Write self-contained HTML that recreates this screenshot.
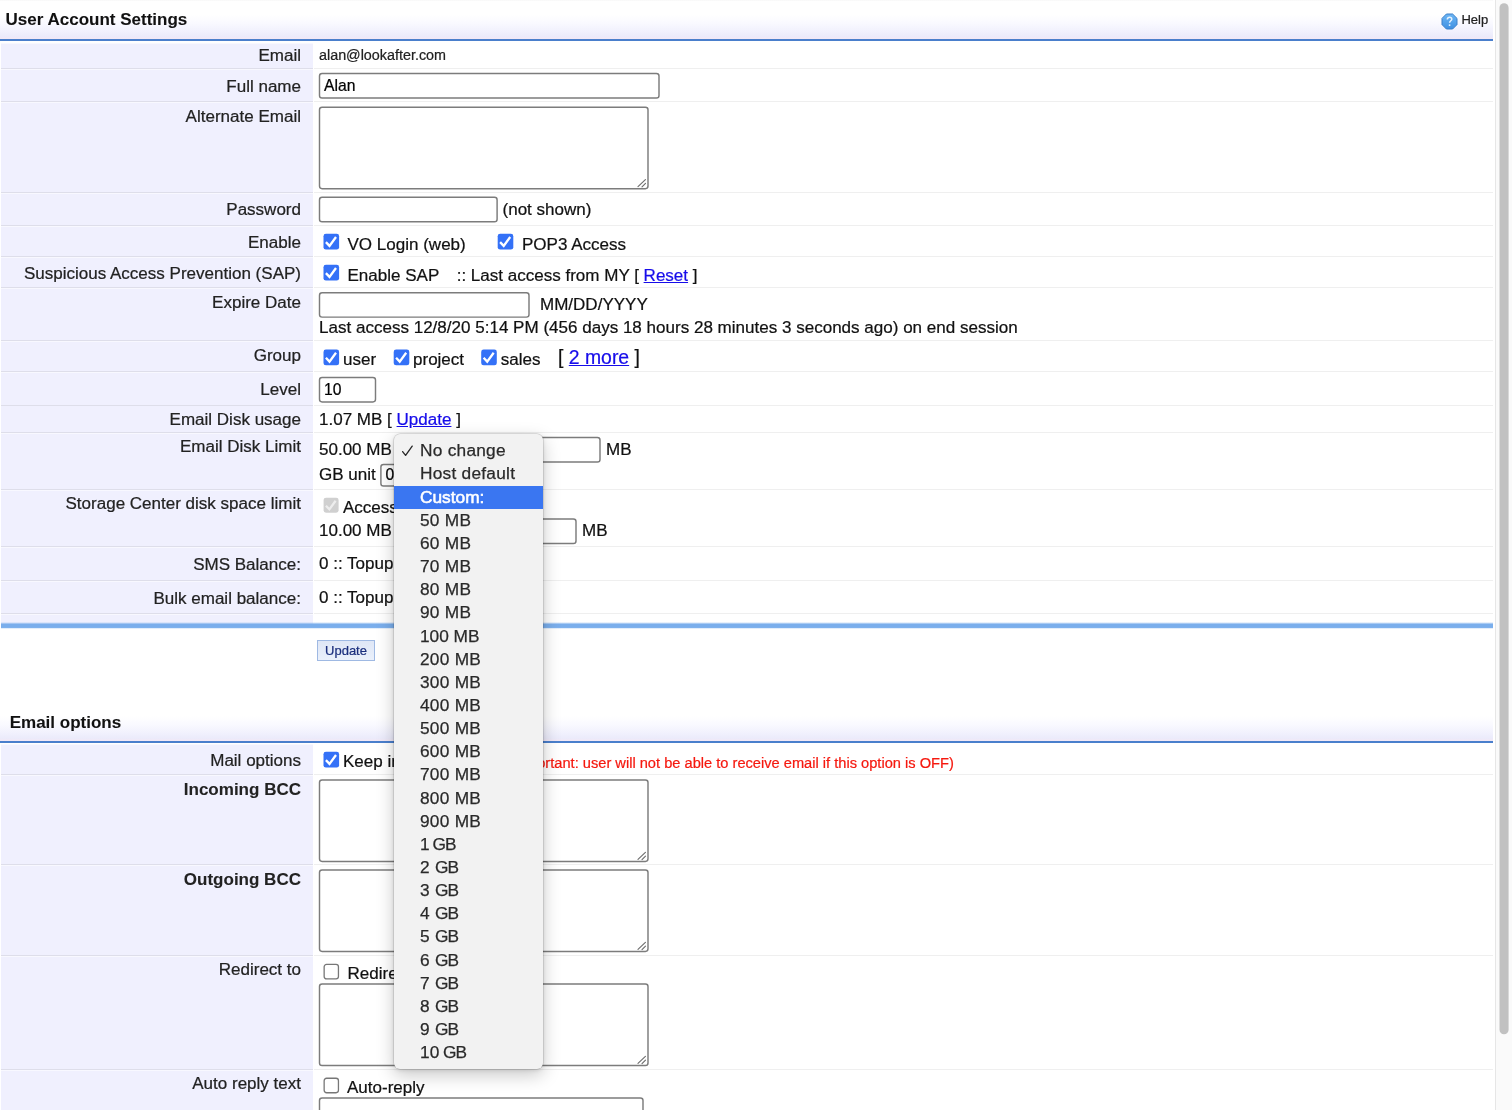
<!DOCTYPE html>
<html lang="en">
<head>
<meta charset="utf-8">
<title>User Account Settings</title>
<style>
html,body{margin:0;padding:0;}
body{width:1512px;height:1110px;overflow:hidden;background:#fff;position:relative;
 font-family:"Liberation Sans",sans-serif;font-size:17.03px;color:#1a1a1a;}
.layer{position:absolute;left:0;top:0;width:1512px;height:1110px;overflow:hidden;}
.txl{-webkit-mask-image:linear-gradient(#000,#000);mask-image:linear-gradient(#000,#000);}
.hdr{position:absolute;left:0;width:1493px;background:linear-gradient(#f7f7f7 0px,#ffffff 1.5px,#ffffff 38%,#f9f9ff 60%,#f1f1fd 80%,#ebebfb 93%,#f3e8f5 100%);
 border-bottom:2px solid #4a7fcc;box-sizing:border-box;}
.hdr.h2{background:linear-gradient(#ffffff 0%,#ffffff 38%,#f9f9ff 60%,#f1f1fd 80%,#ebebfb 93%,#f3e8f5 100%);}
.lab{position:absolute;left:1px;width:312px;background:#f0f0fe;border-bottom:1px solid #dedeea;box-sizing:border-box;}
.strip{position:absolute;left:1px;width:312px;background:#f8f8ff;}
.val{position:absolute;left:314px;width:1179px;border-bottom:1px solid #efefef;box-sizing:border-box;}
.t{position:absolute;white-space:nowrap;line-height:20px;color:#111;-webkit-text-stroke:0.22px;}
.t.lb{right:1211px;color:#222;}
.t.hb{font-size:17px;font-weight:bold;color:#111;-webkit-text-stroke:0.08px;}
.t.it2{font-size:15.7px;color:#000;}
.bx{position:absolute;overflow:visible;}
a{color:#170cea;text-decoration:underline;}
.bar{position:absolute;left:1px;width:1492px;height:7px;background:linear-gradient(rgba(122,174,236,0) 0%,rgba(122,174,236,0.35) 14%,#7aaeec 30%,#7aaeec 78%,rgba(122,174,236,0.3) 90%,rgba(122,174,236,0) 100%);}
.btn{position:absolute;box-sizing:border-box;border:1px solid #9fb9e3;background:linear-gradient(#dfe7f6,#eaf0fb);}
.sb{position:absolute;left:1495px;top:0;width:17px;height:1110px;background:#fafafa;border-left:1px solid #e6e6e6;box-sizing:border-box;}
.dd{position:absolute;box-sizing:border-box;background:#f2f2f2;border-radius:6px;box-shadow:0 0 0 0.5px rgba(0,0,0,0.18),0 6px 18px rgba(0,0,0,0.22),0 1px 4px rgba(0,0,0,0.12);overflow:hidden;}
.dd .sel{position:absolute;left:0;width:100%;background:#3a76f1;}
.it{position:absolute;font-size:17.3px;color:#2a2a2a;white-space:nowrap;letter-spacing:0.25px;-webkit-text-stroke:0.25px;}
.tick{position:absolute;}
</style>
</head>
<body>
<div class="layer" id="bg">
<div class="hdr" style="top:0;height:41px;"></div>
<svg width="17" height="17" viewBox="0 0 17 17" style="position:absolute;left:1440.8px;top:13.2px"><defs><linearGradient id="hg" x1="0" y1="0" x2="0" y2="1"><stop offset="0" stop-color="#6cb6f4"/><stop offset="1" stop-color="#3f90e2"/></linearGradient></defs><path d="M5.4 1 H11.6 L16 5.4 V11.6 L11.6 16 H5.4 L1 11.6 V5.4 Z" fill="url(#hg)" stroke="#3a7fc9" stroke-width="1"/><path d="M6.3 6.6 C6.3 5.1 7.3 4.3 8.6 4.3 C9.9 4.3 10.8 5.1 10.8 6.2 C10.8 7.7 8.6 7.9 8.6 9.8" fill="none" stroke="#e6f3ff" stroke-width="1.5"/><circle cx="8.6" cy="12.1" r="0.95" fill="#e6f3ff"/></svg>
<div class="strip" style="top:43px;height:580px"></div>
<div class="strip" style="top:744px;height:366px"></div>
<div class="lab" style="top:44px;height:25px"></div>
<div class="val" style="top:44px;height:25px"></div>
<div class="lab" style="top:70px;height:32px"></div>
<div class="val" style="top:70px;height:32px"></div>
<svg class="bx" style="left:317px;top:71px" width="347" height="32"><rect x="2.50" y="2.50" width="339.50" height="24.50" rx="2.6" fill="#fff" stroke="#7c7c7c" stroke-width="1.45"/></svg>
<div class="lab" style="top:103px;height:90px"></div>
<div class="val" style="top:103px;height:90px"></div>
<svg class="bx" style="left:317px;top:104px" width="336" height="89"><rect x="2.50" y="3.20" width="328.50" height="81.50" rx="2.6" fill="#fff" stroke="#7c7c7c" stroke-width="1.45"/><path d="M321.00 82.60 L328.40 75.60 M325.00 82.90 L328.50 79.40" stroke="#6e6e6e" stroke-width="1.15" stroke-linecap="round" fill="none"/></svg>
<div class="lab" style="top:194px;height:32px"></div>
<div class="val" style="top:194px;height:32px"></div>
<svg class="bx" style="left:317px;top:194px" width="185" height="32"><rect x="2.50" y="3.30" width="177.60" height="24.50" rx="2.6" fill="#fff" stroke="#7c7c7c" stroke-width="1.45"/></svg>
<div class="lab" style="top:227px;height:30px"></div>
<div class="val" style="top:227px;height:30px"></div>
<svg class="bx" style="left:322px;top:232px" width="19" height="19"><rect x="1.50" y="1.80" width="15.6" height="15.8" rx="2.4" fill="#3471f7"/><path d="M3.90 10.10 L7.50 13.90 L14.00 5.00" fill="none" stroke="#fff" stroke-opacity="1" stroke-width="2.3"/></svg>
<svg class="bx" style="left:496px;top:232px" width="19" height="19"><rect x="1.70" y="1.80" width="15.6" height="15.8" rx="2.4" fill="#3471f7"/><path d="M4.10 10.10 L7.70 13.90 L14.20 5.00" fill="none" stroke="#fff" stroke-opacity="1" stroke-width="2.3"/></svg>
<div class="lab" style="top:258px;height:30px"></div>
<div class="val" style="top:258px;height:30px"></div>
<svg class="bx" style="left:322px;top:263px" width="19" height="19"><rect x="1.50" y="1.80" width="15.6" height="15.8" rx="2.4" fill="#3471f7"/><path d="M3.90 10.10 L7.50 13.90 L14.00 5.00" fill="none" stroke="#fff" stroke-opacity="1" stroke-width="2.3"/></svg>
<div class="lab" style="top:289px;height:52px"></div>
<div class="val" style="top:289px;height:52px"></div>
<svg class="bx" style="left:317px;top:290px" width="217" height="32"><rect x="2.50" y="2.80" width="209.50" height="24.30" rx="2.6" fill="#fff" stroke="#7c7c7c" stroke-width="1.45"/></svg>
<div class="lab" style="top:342px;height:30px"></div>
<div class="val" style="top:342px;height:30px"></div>
<svg class="bx" style="left:322px;top:348px" width="19" height="19"><rect x="1.50" y="1.50" width="15.6" height="15.8" rx="2.4" fill="#3471f7"/><path d="M3.90 9.80 L7.50 13.60 L14.00 4.70" fill="none" stroke="#fff" stroke-opacity="1" stroke-width="2.3"/></svg>
<svg class="bx" style="left:392px;top:348px" width="19" height="19"><rect x="1.70" y="1.50" width="15.6" height="15.8" rx="2.4" fill="#3471f7"/><path d="M4.10 9.80 L7.70 13.60 L14.20 4.70" fill="none" stroke="#fff" stroke-opacity="1" stroke-width="2.3"/></svg>
<svg class="bx" style="left:480px;top:348px" width="19" height="19"><rect x="1.20" y="1.50" width="15.6" height="15.8" rx="2.4" fill="#3471f7"/><path d="M3.60 9.80 L7.20 13.60 L13.70 4.70" fill="none" stroke="#fff" stroke-opacity="1" stroke-width="2.3"/></svg>
<div class="lab" style="top:373px;height:33px"></div>
<div class="val" style="top:373px;height:33px"></div>
<svg class="bx" style="left:317px;top:374px" width="63" height="32"><rect x="2.50" y="3.40" width="56.00" height="24.50" rx="2.6" fill="#fff" stroke="#7c7c7c" stroke-width="1.45"/></svg>
<div class="lab" style="top:406px;height:27px"></div>
<div class="val" style="top:406px;height:27px"></div>
<div class="lab" style="top:434px;height:56px"></div>
<div class="val" style="top:434px;height:56px"></div>
<svg class="bx" style="left:393px;top:435px" width="212" height="32"><rect x="2.50" y="2.50" width="204.50" height="24.50" rx="2.6" fill="#fff" stroke="#7c7c7c" stroke-width="1.45"/></svg>
<svg class="bx" style="left:378px;top:462px" width="66" height="29"><rect x="2.90" y="2.50" width="59.00" height="21.50" rx="2.6" fill="#fff" stroke="#7c7c7c" stroke-width="1.45"/></svg>
<div class="lab" style="top:491px;height:56px"></div>
<div class="val" style="top:491px;height:56px"></div>
<svg class="bx" style="left:322px;top:496px" width="19" height="19"><rect x="1.60" y="1.70" width="15" height="15" rx="2.4" fill="#d0d0d0"/><path d="M3.91 9.68 L7.37 13.33 L13.62 4.78" fill="none" stroke="#fff" stroke-opacity="0.62" stroke-width="2.3"/></svg>
<svg class="bx" style="left:393px;top:516px" width="188" height="32"><rect x="2.50" y="3.00" width="180.50" height="24.50" rx="2.6" fill="#fff" stroke="#7c7c7c" stroke-width="1.45"/></svg>
<div class="lab" style="top:548px;height:33px"></div>
<div class="val" style="top:548px;height:33px"></div>
<div class="lab" style="top:582px;height:32px"></div>
<div class="val" style="top:582px;height:32px"></div>
<div class="lab" style="top:615px;height:9px;border-bottom:0"></div>
<div class="bar" style="top:622px"></div>
<div class="btn" style="left:317px;top:640px;width:58px;height:21px"></div>
<div class="hdr h2" style="top:701px;height:42px;"></div>
<div class="lab" style="top:745px;height:30px"></div>
<div class="val" style="top:745px;height:30px"></div>
<svg class="bx" style="left:322px;top:750px" width="19" height="19"><rect x="1.50" y="1.80" width="15.6" height="15.8" rx="2.4" fill="#3471f7"/><path d="M3.90 10.10 L7.50 13.90 L14.00 5.00" fill="none" stroke="#fff" stroke-opacity="1" stroke-width="2.3"/></svg>
<div class="lab" style="top:776px;height:89px"></div>
<div class="val" style="top:776px;height:89px"></div>
<svg class="bx" style="left:317px;top:777px" width="336" height="89"><rect x="2.50" y="2.90" width="328.50" height="81.50" rx="2.6" fill="#fff" stroke="#7c7c7c" stroke-width="1.45"/><path d="M321.00 82.30 L328.40 75.30 M325.00 82.60 L328.50 79.10" stroke="#6e6e6e" stroke-width="1.15" stroke-linecap="round" fill="none"/></svg>
<div class="lab" style="top:866px;height:90px"></div>
<div class="val" style="top:866px;height:90px"></div>
<svg class="bx" style="left:317px;top:867px" width="336" height="89"><rect x="2.50" y="2.90" width="328.50" height="81.50" rx="2.6" fill="#fff" stroke="#7c7c7c" stroke-width="1.45"/><path d="M321.00 82.30 L328.40 75.30 M325.00 82.60 L328.50 79.10" stroke="#6e6e6e" stroke-width="1.15" stroke-linecap="round" fill="none"/></svg>
<div class="lab" style="top:957px;height:113px"></div>
<div class="val" style="top:957px;height:113px"></div>
<svg class="bx" style="left:322px;top:962px" width="19" height="19"><rect x="2.15" y="2.45" width="14.3" height="14.5" rx="2.4" fill="#fff" stroke="#777" stroke-width="1.3"/></svg>
<svg class="bx" style="left:317px;top:981px" width="336" height="89"><rect x="2.50" y="3.00" width="328.50" height="81.50" rx="2.6" fill="#fff" stroke="#7c7c7c" stroke-width="1.45"/><path d="M321.00 82.40 L328.40 75.40 M325.00 82.70 L328.50 79.20" stroke="#6e6e6e" stroke-width="1.15" stroke-linecap="round" fill="none"/></svg>
<div class="lab" style="top:1071px;height:60px"></div>
<div class="val" style="top:1071px;height:60px"></div>
<svg class="bx" style="left:322px;top:1076px" width="19" height="19"><rect x="2.15" y="2.25" width="14.3" height="14.5" rx="2.4" fill="#fff" stroke="#777" stroke-width="1.3"/></svg>
<svg class="bx" style="left:317px;top:1095px" width="331" height="88"><rect x="2.50" y="2.90" width="323.50" height="81.00" rx="2.6" fill="#fff" stroke="#7c7c7c" stroke-width="1.45"/></svg>
</div>
<div class="layer txl" id="tx">
<div class="t hb" style="left:5.6px;top:10.4px;">User Account Settings</div>
<div class="t" style="left:1461.4px;top:10.3px;font-size:13px;color:#222">Help</div>
<div class="t lb" style="top:46px;">Email</div>
<div class="t" style="left:319px;top:45.3px;font-size:14.35px;color:#222;">alan@lookafter.com</div>
<div class="t lb" style="top:76.7px;">Full name</div>
<div class="t it2" style="left:324px;top:75.85px">Alan</div>
<div class="t lb" style="top:106.6px;">Alternate Email</div>
<div class="t lb" style="top:200px;">Password</div>
<div class="t" style="left:502.5px;top:199.5px;">(not shown)</div>
<div class="t lb" style="top:232.7px;">Enable</div>
<div class="t" style="left:347.5px;top:234.5px;">VO Login (web)</div>
<div class="t" style="left:522px;top:234.5px;">POP3 Access</div>
<div class="t lb" style="top:263.5px;">Suspicious Access Prevention (SAP)</div>
<div class="t" style="left:347.5px;top:265.5px;">Enable SAP</div>
<div class="t" style="left:456.7px;top:265.5px;">:: Last access from MY [ <a>Reset</a> ]</div>
<div class="t lb" style="top:292.7px;">Expire Date</div>
<div class="t" style="left:540px;top:295.0px;">MM/DD/YYYY</div>
<div class="t" style="left:319px;top:318.4px;font-size:17.04px;">Last access 12/8/20 5:14 PM (456 days 18 hours 28 minutes 3 seconds ago) on end session</div>
<div class="t lb" style="top:345.5px;">Group</div>
<div class="t" style="left:343px;top:350.0px;">user</div>
<div class="t" style="left:413px;top:350.0px;">project</div>
<div class="t" style="left:500.7px;top:350.0px;">sales</div>
<div class="t" style="left:558px;top:346.8px;font-size:19.4px;">[ <a>2 more</a> ]</div>
<div class="t lb" style="top:379.5px;">Level</div>
<div class="t it2" style="left:324px;top:380.35px">10</div>
<div class="t lb" style="top:409.5px;">Email Disk usage</div>
<div class="t" style="left:319px;top:409.5px;">1.07 MB [ <a>Update</a> ]</div>
<div class="t lb" style="top:436.5px;">Email Disk Limit</div>
<div class="t" style="left:319px;top:439.5px;">50.00 MB</div>
<div class="t" style="left:606px;top:439.5px;">MB</div>
<div class="t" style="left:319px;top:465.0px;">GB unit</div>
<div class="t it2" style="left:385.4px;top:465.35px">0</div>
<div class="t lb" style="top:493.5px;">Storage Center disk space limit</div>
<div class="t" style="left:343px;top:497.5px;">Access</div>
<div class="t" style="left:319px;top:520.5px;">10.00 MB</div>
<div class="t" style="left:582px;top:520.5px;">MB</div>
<div class="t lb" style="top:554.5px;">SMS Balance:</div>
<div class="t" style="left:319px;top:554.3px;">0 :: Topup</div>
<div class="t lb" style="top:588.7px;">Bulk email balance:</div>
<div class="t" style="left:319px;top:588.0px;">0 :: Topup</div>
<div class="t" style="left:317px;width:58px;top:643px;text-align:center;font-size:13px;line-height:16px;color:#1b2f7d;">Update</div>
<div class="t hb" style="left:9.7px;top:713.1px;">Email options</div>
<div class="t lb" style="top:750.5px;">Mail options</div>
<div class="t" style="left:343px;top:752.1px;">Keep in</div>
<div class="t" style="left:512.8px;top:753.2px;font-size:14.65px;color:#f5190f;">Important: user will not be able to receive email if this option is OFF)</div>
<div class="t lb" style="top:779.8px;font-weight:bold;-webkit-text-stroke:0.08px;">Incoming BCC</div>
<div class="t lb" style="top:869.8px;font-weight:bold;-webkit-text-stroke:0.08px;">Outgoing BCC</div>
<div class="t lb" style="top:959.5px;">Redirect to</div>
<div class="t" style="left:347.5px;top:964.0px;">Redirect</div>
<div class="t lb" style="top:1073.5px;">Auto reply text</div>
<div class="t" style="left:347px;top:1078.0px;">Auto-reply</div>
</div>
<div class="layer" id="ddbg">
<div class="dd" style="left:394px;top:434px;width:149px;height:635px"><div class="sel" style="top:51.62px;height:23.15px"></div><svg class="tick" width="14" height="14" viewBox="0 0 14 14" style="left:7px;top:10px"><path d="M1.6 7.6 L4.6 11.4 L11.2 2.1" fill="none" stroke="#2a2a2a" stroke-width="1.35" stroke-linecap="round" stroke-linejoin="round"/></svg></div>
<div class="sb"></div><svg width="17" height="1110" style="position:absolute;left:1495px;top:0"><rect x="4.5" y="3.2" width="9.1" height="1031" rx="4.5" fill="#c1c1c1"/></svg>
</div>
<div class="layer txl" id="ddtx">
<div class="it" style="left:420px;top:439.32px;height:23.15px;line-height:23.15px;">No change</div>
<div class="it" style="left:420px;top:462.47px;height:23.15px;line-height:23.15px;">Host default</div>
<div class="it" style="left:420px;top:485.62px;height:23.15px;line-height:23.15px;color:#fff;-webkit-text-stroke:0.55px #fff;letter-spacing:0;">Custom:</div>
<div class="it" style="left:420px;top:508.77px;height:23.15px;line-height:23.15px;">50 MB</div>
<div class="it" style="left:420px;top:531.92px;height:23.15px;line-height:23.15px;">60 MB</div>
<div class="it" style="left:420px;top:555.07px;height:23.15px;line-height:23.15px;">70 MB</div>
<div class="it" style="left:420px;top:578.22px;height:23.15px;line-height:23.15px;">80 MB</div>
<div class="it" style="left:420px;top:601.37px;height:23.15px;line-height:23.15px;">90 MB</div>
<div class="it" style="left:420px;top:624.52px;height:23.15px;line-height:23.15px;letter-spacing:-0.03px;">100 MB</div>
<div class="it" style="left:420px;top:647.67px;height:23.15px;line-height:23.15px;">200 MB</div>
<div class="it" style="left:420px;top:670.82px;height:23.15px;line-height:23.15px;">300 MB</div>
<div class="it" style="left:420px;top:693.97px;height:23.15px;line-height:23.15px;">400 MB</div>
<div class="it" style="left:420px;top:717.12px;height:23.15px;line-height:23.15px;">500 MB</div>
<div class="it" style="left:420px;top:740.27px;height:23.15px;line-height:23.15px;">600 MB</div>
<div class="it" style="left:420px;top:763.42px;height:23.15px;line-height:23.15px;">700 MB</div>
<div class="it" style="left:420px;top:786.57px;height:23.15px;line-height:23.15px;">800 MB</div>
<div class="it" style="left:420px;top:809.72px;height:23.15px;line-height:23.15px;">900 MB</div>
<div class="it" style="left:420px;top:832.87px;height:23.15px;line-height:23.15px;">1 <span style="letter-spacing:-0.85px;margin-left:-2.4px">GB</span></div>
<div class="it" style="left:420px;top:856.02px;height:23.15px;line-height:23.15px;">2 <span style="letter-spacing:-0.85px;margin-left:0px">GB</span></div>
<div class="it" style="left:420px;top:879.17px;height:23.15px;line-height:23.15px;">3 <span style="letter-spacing:-0.85px;margin-left:0px">GB</span></div>
<div class="it" style="left:420px;top:902.32px;height:23.15px;line-height:23.15px;">4 <span style="letter-spacing:-0.85px;margin-left:0px">GB</span></div>
<div class="it" style="left:420px;top:925.47px;height:23.15px;line-height:23.15px;">5 <span style="letter-spacing:-0.85px;margin-left:0px">GB</span></div>
<div class="it" style="left:420px;top:948.62px;height:23.15px;line-height:23.15px;">6 <span style="letter-spacing:-0.85px;margin-left:0px">GB</span></div>
<div class="it" style="left:420px;top:971.77px;height:23.15px;line-height:23.15px;">7 <span style="letter-spacing:-0.85px;margin-left:0px">GB</span></div>
<div class="it" style="left:420px;top:994.92px;height:23.15px;line-height:23.15px;">8 <span style="letter-spacing:-0.85px;margin-left:0px">GB</span></div>
<div class="it" style="left:420px;top:1018.08px;height:23.15px;line-height:23.15px;">9 <span style="letter-spacing:-0.85px;margin-left:0px">GB</span></div>
<div class="it" style="left:420px;top:1041.22px;height:23.15px;line-height:23.15px;">10 <span style="letter-spacing:-0.85px;margin-left:-1.9px">GB</span></div>
</div>
</body>
</html>
